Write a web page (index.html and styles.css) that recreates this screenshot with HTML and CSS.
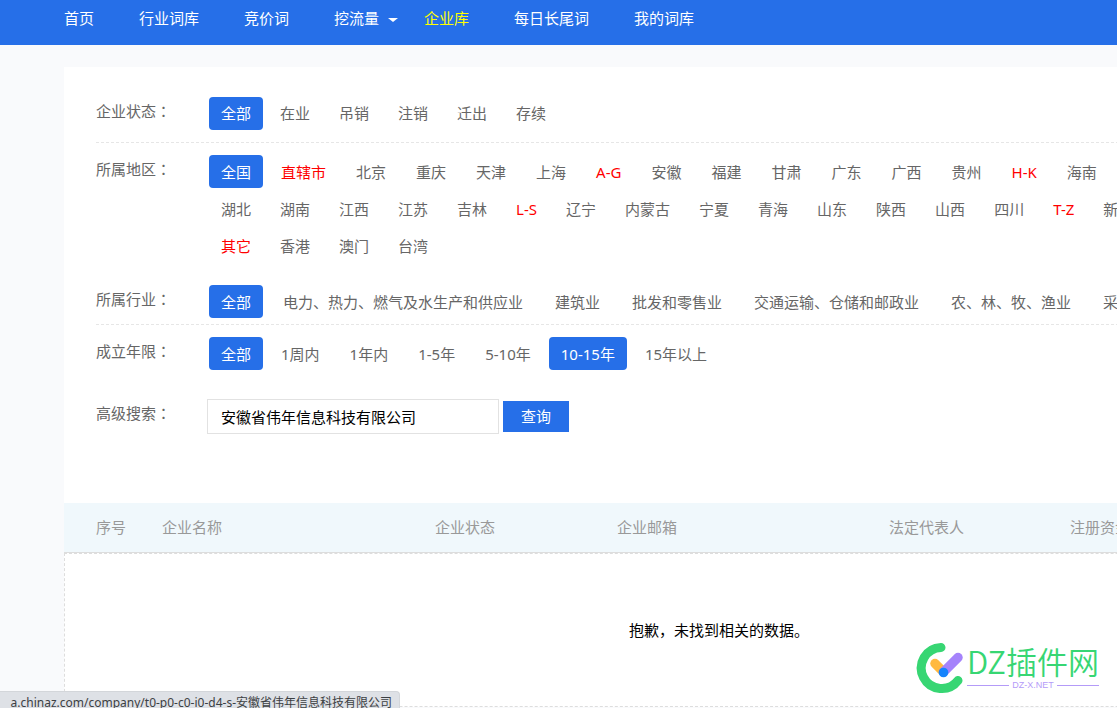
FILE: index.html
```html
<!DOCTYPE html>
<html lang="zh-CN">
<head>
<meta charset="utf-8">
<title>企业库</title>
<link rel="stylesheet" href="styles.css">
</head>
<body>
<nav class="topnav">
  <a href="#">首页</a>
  <a href="#">行业词库</a>
  <a href="#">竞价词</a>
  <a href="#" class="has-menu">挖流量</a>
  <a href="#" class="current">企业库</a>
  <a href="#">每日长尾词</a>
  <a href="#">我的词库</a>
</nav>
<main class="panel">
  <section class="filters">
    <div class="filter ruled status">
      <span class="label">企业状态<span class="mark" lang="zh-TW">：</span></span>
      <div class="options compact"><a href="#" class="on">全部</a><a href="#">在业</a><a href="#">吊销</a><a href="#">注销</a><a href="#">迁出</a><a href="#">存续</a></div>
    </div>
    <div class="filter region">
      <span class="label">所属地区<span class="mark" lang="zh-TW">：</span></span>
      <div class="lines">
        <div class="options"><a href="#" class="on">全国</a><a href="#" class="group">直辖市</a><a href="#">北京</a><a href="#">重庆</a><a href="#">天津</a><a href="#">上海</a><a href="#" class="group">A-G</a><a href="#">安徽</a><a href="#">福建</a><a href="#">甘肃</a><a href="#">广东</a><a href="#">广西</a><a href="#">贵州</a><a href="#" class="group">H-K</a><a href="#">海南</a></div>
        <div class="options compact"><a href="#">湖北</a><a href="#">湖南</a><a href="#">江西</a><a href="#">江苏</a><a href="#">吉林</a><a href="#" class="group">L-S</a><a href="#">辽宁</a><a href="#">内蒙古</a><a href="#">宁夏</a><a href="#">青海</a><a href="#">山东</a><a href="#">陕西</a><a href="#">山西</a><a href="#">四川</a><a href="#" class="group">T-Z</a><a href="#">新疆</a></div>
        <div class="options compact"><a href="#" class="group">其它</a><a href="#">香港</a><a href="#">澳门</a><a href="#">台湾</a></div>
      </div>
    </div>
    <div class="filter ruled industry">
      <span class="label">所属行业<span class="mark" lang="zh-TW">：</span></span>
      <div class="options"><a href="#" class="on">全部</a><a href="#">电力、热力、燃气及水生产和供应业</a><a href="#">建筑业</a><a href="#">批发和零售业</a><a href="#">交通运输、仓储和邮政业</a><a href="#">农、林、牧、渔业</a><a href="#">采矿业</a></div>
    </div>
    <div class="filter">
      <span class="label">成立年限<span class="mark" lang="zh-TW">：</span></span>
      <div class="options"><a href="#" class="on">全部</a><a href="#">1周内</a><a href="#">1年内</a><a href="#">1-5年</a><a href="#">5-10年</a><a href="#" class="on">10-15年</a><a href="#">15年以上</a></div>
    </div>
    <form class="filter search">
      <label class="label" for="keyword">高级搜索<span class="mark" lang="zh-TW">：</span></label>
      <input id="keyword" type="text" value="安徽省伟年信息科技有限公司">
      <button type="button">查询</button>
    </form>
  </section>
  <table class="results">
    <colgroup><col class="c-no"><col class="c-name"><col class="c-state"><col class="c-mail"><col class="c-legal"><col></colgroup>
    <thead>
      <tr><th>序号</th><th>企业名称</th><th>企业状态</th><th>企业邮箱</th><th>法定代表人</th><th>注册资金</th></tr>
    </thead>
    <tbody>
      <tr><td colspan="6">抱歉，未找到相关的数据。</td></tr>
    </tbody>
  </table>
</main>
<div class="brand">
  <svg width="50" height="52" viewBox="0 0 50 52" aria-hidden="true">
    <path d="M25 5.500A20.500 20.500 0 1 0 42 38.500" fill="none" stroke="#37d673" stroke-width="9" stroke-linecap="round"/>
    <path d="M19 21.500L27.500 30" stroke="#ffb940" stroke-width="9.500" stroke-linecap="round"/>
    <path d="M27.500 30L42 15.500" stroke="#a583fb" stroke-width="9.500" stroke-linecap="round"/>
    <circle cx="27.500" cy="30.500" r="4.800" fill="#1684fc"/>
  </svg>
  <div class="brand-text">
    <span class="brand-name">DZ插件网</span>
    <span class="brand-site">DZ-X.NET</span>
  </div>
</div>
<div class="statusbar"><span>a.chinaz.com/company/t0-p0-c0-i0-d4-s-安徽省伟年信息科技有限公司</span></div>
</body>
</html>
```

FILE: styles.css
```css
* { box-sizing: border-box; }
html { height: 100%; }
body {
  position: relative;
  min-height: 100%;
  margin: 0;
  overflow: hidden;
  background: #f9fafc;
  color: #666;
  font: 15px/22px "Noto Sans", "Noto Sans CJK SC", sans-serif;
}
a { color: inherit; text-decoration: none; }
.mark { font-family: "Noto Sans CJK TC", sans-serif; line-height: 1; }

.topnav {
  display: flex;
  gap: 45px;
  height: 45px;
  padding: 7px 64px 0;
  background: #266fe8;
  color: #fff;
  white-space: nowrap;
}
.topnav .current { color: #ff0; }
.has-menu { position: relative; }
.has-menu::after {
  content: "";
  position: absolute;
  top: 11px;
  left: 54px;
  border: 5px solid transparent;
  border-top: 4px solid #fff;
  border-bottom: 0;
}

.panel {
  width: 1310px;
  margin: 22px 0 0 64px;
  background: #fff;
}
.filters { padding: 30px 0 69px 32px; }
.filter {
  display: flex;
  align-items: flex-start;
  margin-bottom: 12px;
  white-space: nowrap;
}
.ruled {
  padding-bottom: 12px;
  border-bottom: 1px dashed #e6e6e6;
}
.label { flex: none; width: 113px; padding-top: 3px; }
.options { display: flex; gap: 6px; }
.options.compact { gap: 5px; }
.options a {
  padding: 6px 12px 5px;
  border-radius: 4px;
}
.options .group { color: #f00; }
.options .on { background: #266fe8; color: #fff; }
.status .options a { padding: 5px 12px 6px; }
.lines { display: grid; gap: 4px; }
.region { margin-bottom: 23px; }
.industry { padding-bottom: 6px; }
.industry .options { gap: 8px; }

.search { margin: 29px 0 0; }
.search .label { width: 111px; }
.search input {
  width: 292px;
  height: 35px;
  margin-right: 4px;
  padding: 0 13px 1px;
  border: 1px solid #e2e2e2;
  background: #fff;
  color: #000;
  font: inherit;
}
.search button {
  width: 66px;
  height: 31px;
  margin-top: 2px;
  padding: 0 0 1px;
  border: 0;
  background: #266fe8;
  color: #fff;
  font: inherit;
}

.results {
  width: 100%;
  table-layout: fixed;
  border-spacing: 0;
}
.c-no { width: 98px; }
.c-name { width: 273px; }
.c-state { width: 182px; }
.c-mail { width: 272px; }
.c-legal { width: 181px; }
.results th {
  height: 50px;
  padding: 0 0 2px;
  border-bottom: 1px solid #ddd;
  background: #f0f8fc;
  color: #999;
  font-weight: 400;
  text-align: left;
}
.results th:first-child { padding-left: 32px; }
.results td {
  height: 154px;
  padding: 0;
  border: 1px dashed #ddd;
  color: #000;
  text-align: center;
}

.brand {
  position: absolute;
  right: 18px;
  bottom: 14px;
  display: flex;
  gap: 1px;
}
.brand-text {
  display: flex;
  flex-direction: column;
  align-items: stretch;
  white-space: nowrap;
}
.brand-name {
  color: #37d673;
  font-family: "Noto Sans CJK SC", sans-serif;
  font-size: 31px;
  font-weight: 350;
  line-height: 38px;
}
.brand-site {
  display: flex;
  align-items: center;
  gap: 3px;
  color: #b49bf8;
  font-family: "Liberation Sans", sans-serif;
  font-size: 9px;
  line-height: 10px;
}
.brand-site::before,
.brand-site::after {
  content: "";
  flex: 1;
  height: 1px;
  background: #b49bf8;
}

.statusbar {
  position: absolute;
  bottom: 0;
  left: 0;
  display: flex;
  justify-content: flex-end;
  width: 400px;
  height: 17px;
  padding: 3px 7px 0 0;
  overflow: hidden;
  border: 1px solid #d3d6da;
  border-width: 1px 1px 0 0;
  border-radius: 0 4px 0 0;
  background: #dee1e6;
  color: #3c4043;
  font-size: 12px;
  line-height: 16px;
  white-space: nowrap;
}
```
